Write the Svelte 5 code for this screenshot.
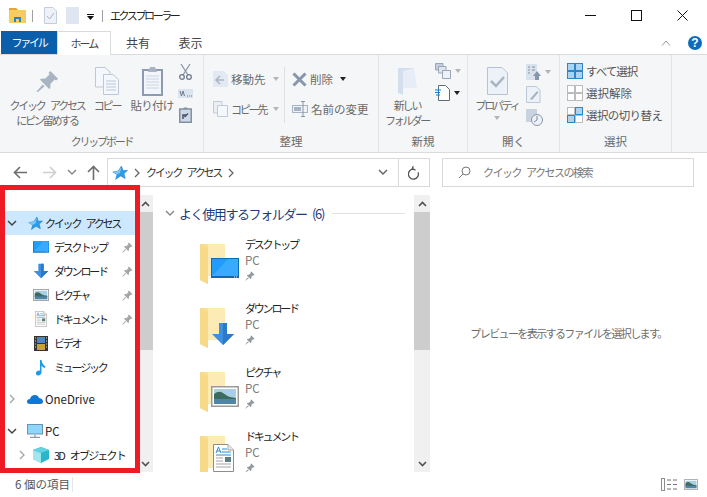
<script>
    const selectIcons = [
        { label: "すべて選択", on: [1, 1, 1, 1], cls: "tight-1" },
        { label: "選択解除", on: [0, 0, 0, 0], cls: "" },
        { label: "選択の切り替え", on: [0, 1, 1, 0], cls: "tight-2" },
    ];
    const tiles = ["デスクトップ", "ダウンロード", "ピクチャ", "ドキュメント"];
</script>

{#snippet pin(size, color)}
    <svg width={size} height={size} viewBox="0 0 24 24" fill={color}>
        <path d="M15 1 23 9 21 11 19.5 9.8 15 14.5Q15.8 18 14 20L4 10Q6 8.2 9.5 9L14.2 4.5 13 3Z" />
        <path d="M7 15 9 17 2 23H1V22Z" />
    </svg>
{/snippet}

{#snippet star(size)}
    <svg width={size} height={size} viewBox="0 0 16 16">
        <path d="M9.5 1 11 5.6 15.6 5.4 12 8.6 13.2 13.6 8.6 11 3.6 14.4 5 9.6.8 7 6.2 6Z" fill="#2b9ce8" stroke="#1976c8" stroke-width=".5" />
        <path d="M9.5 2 8 8 5 9.6.8 7 6.2 6Z" fill="#7cc8f5" />
    </svg>
{/snippet}

{#snippet desktop(w, h)}
    <svg width={w} height={h} viewBox="0 0 28 20">
        <rect width="28" height="20" fill="#0b6cb0" />
        <rect x="1" y="1" width="26" height="17" fill="#1f9dfa" />
        <path d="M1 18 17 1H27V18Z" fill="#39aaff" />
        <path d="M23 19h1M25 19h1" stroke="#cfe8fb" />
    </svg>
{/snippet}

{#snippet download(w, h)}
    <svg width={w} height={h} viewBox="0 0 24 24">
        <path d="M8 1H16V12H23L12 23 1 12H8Z" fill="#3d8fdf" />
        <path d="M12 1H16V12H23L12 23Z" fill="#2a79ca" />
    </svg>
{/snippet}

{#snippet picture(w, h)}
    <svg width={w} height={h} viewBox="0 0 28 21">
        <rect x=".75" y=".75" width="26.5" height="19.5" fill="#fff" stroke="#9a9a9a" stroke-width="1.5" />
        <rect x="3" y="3" width="22" height="15" fill="#a9cfe6" />
        <path d="M3 8Q8 4 12 7T19 11L25 12V14H3Z" fill="#3d6b5d" />
        <rect x="3" y="13" width="22" height="5" fill="#4f86a8" />
    </svg>
{/snippet}

{#snippet documentIcon(w, h)}
    <svg width={w} height={h} viewBox="0 0 21 28">
        <path d="M.5.5H15L20.5 6V27.5H.5Z" fill="#fff" stroke="#8d8d8d" />
        <path d="M15 .5V6H20.5" fill="#e8e8e8" stroke="#a8a8a8" />
        <path d="M3 9 5.5 3 8 9M4 7H7" fill="none" stroke="#2a8fd0" />
        <path d="M9 5H14M9 8H18M3 11H18" stroke="#2a8fd0" />
        <path d="M3 14H10M3 17H10M3 20H18M3 23H18" stroke="#a5a5a5" />
        <rect x="12" y="13" width="6" height="5" fill="#5a7f80" />
    </svg>
{/snippet}

{#snippet folder()}
    <svg width="26" height="41" viewBox="0 0 26 41">
        <path d="M0 1H25V33H8V41L0 37Z" fill="#f8e09a" />
        <path d="M8 1H25V33H8Z" fill="#fcebb4" />
        <path d="M0 1 8 5V41L0 37Z" fill="#f6da88" />
    </svg>
{/snippet}

{#snippet scrollbar()}
    <div class="scrollbar">
        <div class="arrow">
            <svg width="9" height="6" viewBox="0 0 9 6"><path d="M1 5 4.5 1.500 8 5" fill="none" stroke="#505050" stroke-width="1.600" /></svg>
        </div>
        <div class="thumb"></div>
        <div class="track"></div>
        <div class="arrow">
            <svg width="9" height="6" viewBox="0 0 9 6"><path d="M1 1 4.500 4.500 8 1" fill="none" stroke="#505050" stroke-width="1.600" /></svg>
        </div>
    </div>
{/snippet}

{#snippet chevronDown(color)}
    <svg width="10" height="7" viewBox="0 0 10 7"><path d="M1 1 5 5 9 1" fill="none" stroke={color} stroke-width="1.500" /></svg>
{/snippet}

{#snippet chevronRight(color)}
    <svg width="7" height="10" viewBox="0 0 7 10"><path d="M1 1 5 5 1 9" fill="none" stroke={color} stroke-width="1.300" /></svg>
{/snippet}

<div class="window">
    <div class="titlebar">
        <svg class="app-icon" width="17" height="15" viewBox="0 0 17 15">
            <path d="M0 0H7L9 2H17V15H0Z" fill="#f6cd5c" />
            <path d="M0 0H7L9 2H0Z" fill="#e4a63a" />
            <path d="M5 14V9H12V14H10V11H7V14Z" fill="#2e7fc4" />
        </svg>
        <span class="bar-sep"></span>
        <svg class="qa-one" width="13" height="17" viewBox="0 0 13 17">
            <path d="M.5.5H9L12.500 4V16.500H.5Z" fill="#eef2f8" stroke="#c2cede" />
            <path d="M3 9 5.500 12 10 6" fill="none" stroke="#a8b4c4" />
        </svg>
        <svg class="qa-two" width="13" height="17" viewBox="0 0 13 17">
            <path d="M0 0H13V17H0Z" fill="#dfe6f2" />
        </svg>
        <svg class="qa-menu" width="7" height="6" viewBox="0 0 7 6"><path d="M0 0H7V1H0ZM0 2H7L3.500 6Z" fill="#111" /></svg>
        <span class="bar-sep second"></span>
        <span class="title">エクスプローラー</span>
        <div class="window-buttons">
            <svg width="11" height="11" viewBox="0 0 11 11"><path d="M0 5.500H11" stroke="#111" /></svg>
            <svg width="11" height="11" viewBox="0 0 11 11"><rect x=".5" y=".5" width="10" height="10" fill="none" stroke="#111" /></svg>
            <svg width="11" height="11" viewBox="0 0 11 11"><path d="M.5.5 10.500 10.500M10.500.5 .5 10.500" stroke="#111" /></svg>
        </div>
    </div>

    <div class="tabs">
        <span class="tab file">ファイル</span>
        <span class="tab home">ホーム</span>
        <span class="tab share">共有</span>
        <span class="tab view">表示</span>
        <svg class="collapse" width="10" height="6" viewBox="0 0 10 6"><path d="M1 5.500 5 1 9 5.500" fill="none" stroke="#9a9a9a" /></svg>
        <span class="help">?</span>
    </div>

    <div class="ribbon">
        <section class="group clipboard">
            <div class="body">
                <div class="big pin-btn">
                    <div class="big-icon">{@render pin(23, "#a9b4c3")}</div>
                    <span class="kana">クイック アクセス<br />にピン留めする</span>
                </div>
                <div class="big copy-btn">
                    <div class="big-icon">
                        <svg width="24" height="28" viewBox="0 0 24 28">
                            <path d="M.5.500H10L15 5V20H.5Z" fill="#f4f7fb" stroke="#bcc8d8" />
                            <path d="M8.500 7.500H18L23.500 12.500V27.500H8.500Z" fill="#f4f7fb" stroke="#bcc8d8" />
                            <path d="M11 14H21M11 17H21M11 20H21M11 23H21" stroke="#bcc8d8" />
                        </svg>
                    </div>
                    <span class="kana">コピー</span>
                </div>
                <div class="big paste-btn">
                    <div class="big-icon">
                        <svg width="21" height="30" viewBox="0 0 21 30">
                            <rect x="1" y="4" width="19" height="25" fill="#f2f5fa" stroke="#8d9bb0" stroke-width="2" />
                            <path d="M7 4 8 1H13L14 4 15 6H6Z" fill="#a9b4c3" />
                            <path d="M4 10H17M4 13H17M4 16H17M4 19H17M4 22H17" stroke="#ccd5e2" />
                        </svg>
                    </div>
                    <span>貼り付け</span>
                </div>
                <div class="clip-small">
                    <svg width="13" height="17" viewBox="0 0 13 17">
                        <path d="M2 1 9 12M11 1 4 12" stroke="#8a96a8" stroke-width="1.300" fill="none" />
                        <circle cx="3" cy="14" r="2.300" fill="none" stroke="#6d7a8d" stroke-width="1.300" />
                        <circle cx="10" cy="14" r="2.300" fill="none" stroke="#6d7a8d" stroke-width="1.300" />
                    </svg>
                    <svg width="15" height="9" viewBox="0 0 15 9">
                        <rect width="15" height="9" fill="#dbe3ee" />
                        <path d="M2 2 3.500 7 5 2 6.500 7M9 7H10M11 7H12M13 7H14" stroke="#6d7a8d" fill="none" />
                    </svg>
                    <svg width="13" height="16" viewBox="0 0 13 16">
                        <rect x=".75" y="2" width="11.500" height="13.250" fill="#cfd8e4" stroke="#8290a4" stroke-width="1.500" />
                        <path d="M4 2 5 .5H8L9 2Z" fill="#8290a4" />
                        <path d="M4 12V8L8 8M5.500 10 9 6.500" stroke="#44546a" stroke-width="1.500" fill="none" />
                    </svg>
                </div>
            </div>
            <div class="group-label kana">クリップボード</div>
        </section>

        <section class="group organize">
            <div class="body">
                <div class="org-col">
                    <div class="org-row">
                        <svg width="15" height="16" viewBox="0 0 15 16">
                            <path d="M0 0H11L15 4V16H0Z" fill="#e3e9f2" />
                            <path d="M3 9H11M7 5 3 9 7 13" stroke="#a9b4c3" stroke-width="1.500" fill="none" />
                        </svg>
                        <span>移動先</span>
                        <i class="caret pale"></i>
                    </div>
                    <div class="org-row">
                        <svg width="15" height="16" viewBox="0 0 15 16">
                            <path d="M.5.500H9V12H.5Z" fill="#eaeff6" stroke="#c0cbda" />
                            <path d="M4.500 4.500H14.500V15.500H4.500Z" fill="#f4f7fb" stroke="#c0cbda" />
                        </svg>
                        <span class="kana">コピー先</span>
                        <i class="caret pale"></i>
                    </div>
                </div>
                <span class="org-sep"></span>
                <div class="org-col second">
                    <div class="org-row">
                        <svg width="15" height="15" viewBox="0 0 15 15"><path d="M1.500 1.500 13.500 13.500M13.500 1.500 1.500 13.500" stroke="#8796ac" stroke-width="3" /></svg>
                        <span>削除</span>
                        <i class="caret"></i>
                    </div>
                    <div class="org-row">
                        <svg width="16" height="16" viewBox="0 0 16 16">
                            <rect x=".5" y="4.500" width="15" height="7" fill="#eef2f8" stroke="#a9b4c3" />
                            <rect x="2" y="6" width="7" height="4" fill="#a9b4c3" />
                            <path d="M11 1V15M9 .5H13M9 15.500H13" stroke="#8796ac" />
                        </svg>
                        <span>名前の変更</span>
                    </div>
                </div>
            </div>
            <div class="group-label">整理</div>
        </section>

        <section class="group newgroup">
            <div class="body">
                <div class="big new-btn">
                    <div class="big-icon">
                        <svg width="19" height="27" viewBox="0 0 19 27">
                            <path d="M0 0H16V20H5V27L0 25Z" fill="#d4dfee" />
                            <path d="M5 3 16 0 19 20H5Z" fill="#e6edf6" />
                        </svg>
                    </div>
                    <span class="kana">新しい<br />フォルダー</span>
                </div>
                <div class="new-small">
                    <div class="small-line">
                        <svg width="16" height="16" viewBox="0 0 16 16">
                            <path d="M.5.500H8V7H.5Z" fill="#c4cedc" stroke="#9aa7b8" />
                            <path d="M3.500 3.500H11V10H3.500Z" fill="#dde4ee" stroke="#9aa7b8" />
                            <path d="M7.500 7.500H15.500V15.500H7.500Z" fill="#eef2f8" stroke="#9aa7b8" />
                        </svg>
                        <i class="caret pale"></i>
                    </div>
                    <div class="small-line">
                        <svg width="15" height="16" viewBox="0 0 15 16">
                            <path d="M3.500.500H10.500L14.500 4.500V15.500H3.500Z" fill="#fff" stroke="#5d6b7d" />
                            <path d="M0 5H6M0 7.500H5M1 10H5" stroke="#1e78c8" stroke-width="1.200" />
                        </svg>
                        <i class="caret"></i>
                    </div>
                </div>
            </div>
            <div class="group-label">新規</div>
        </section>

        <section class="group opengroup">
            <div class="body">
                <div class="big prop-btn">
                    <div class="big-icon">
                        <svg width="21" height="28" viewBox="0 0 21 28">
                            <path d="M.5.500H15L20.500 6V27.500H.5Z" fill="#edf2f8" stroke="#b6c3d4" />
                            <path d="M4 14 9 19 17 10" fill="none" stroke="#a9b4c3" stroke-width="2.500" />
                        </svg>
                    </div>
                    <span class="kana">プロパティ</span>
                    <i class="caret pale"></i>
                </div>
                <div class="open-small">
                    <div class="small-line">
                        <svg width="15" height="16" viewBox="0 0 15 16">
                            <path d="M0 0H11V16H0Z" fill="#d9e1ec" />
                            <path d="M2 3H4M6 3H9M2 6H4M6 6H9M2 9H4" stroke="#8190a4" />
                            <path d="M7 12 11 7 15 12H13V16H9V12Z" fill="#8796ac" />
                        </svg>
                        <i class="caret pale"></i>
                    </div>
                    <div class="small-line">
                        <svg width="15" height="17" viewBox="0 0 15 17">
                            <path d="M.5.500H10L14 4V16.500H.5Z" fill="#edf2f8" stroke="#bcc8d8" />
                            <path d="M4 13 11 5 12.500 6.500 6 14Z" fill="#a9b4c3" />
                        </svg>
                    </div>
                    <div class="small-line">
                        <svg width="17" height="17" viewBox="0 0 17 17">
                            <rect width="11" height="13" fill="#c9d3e0" />
                            <circle cx="11" cy="11" r="5.500" fill="#eef2f8" stroke="#8796ac" />
                            <path d="M11 7V11L8 13" stroke="#7a889c" fill="none" />
                        </svg>
                    </div>
                </div>
            </div>
            <div class="group-label">開く</div>
        </section>

        <section class="group selectgroup">
            <div class="body select-list">
                {#each selectIcons as row}
                    <div class="select-row">
                        <svg width="16" height="16" viewBox="0 0 16 16">
                            {#each row.on as on, i}
                                <rect
                                    x={i % 2 ? 8.5 : 0.5}
                                    y={i > 1 ? 8.5 : 0.5}
                                    width="7"
                                    height="7"
                                    fill={on ? "#a8d4f5" : "#fff"}
                                    stroke={on ? "#2d86c8" : "#bbb"}
                                />
                            {/each}
                        </svg>
                        <span class={row.cls}>{row.label}</span>
                    </div>
                {/each}
            </div>
            <div class="group-label">選択</div>
        </section>
    </div>

    <div class="navbar">
        <svg class="back" width="15" height="13" viewBox="0 0 15 13"><path d="M14 6.500H2M7 1 1.500 6.500 7 12" fill="none" stroke="#6d6d6d" stroke-width="1.600" /></svg>
        <svg class="forward" width="15" height="13" viewBox="0 0 15 13"><path d="M1 6.500H13M8 1 13.500 6.500 8 12" fill="none" stroke="#cfcfcf" stroke-width="1.600" /></svg>
        <span class="recent">{@render chevronDown("#8a8a8a")}</span>
        <svg class="up" width="13" height="15" viewBox="0 0 13 15"><path d="M6.500 15V2M1 7 6.500 1.500 12 7" fill="none" stroke="#6d6d6d" stroke-width="1.600" /></svg>
        <div class="address">
            {@render star(16)}
            <span class="crumb-chevron">{@render chevronRight("#666")}</span>
            <span class="crumb kana">クイック アクセス</span>
            <span class="crumb-chevron">{@render chevronRight("#666")}</span>
            <span class="address-drop">{@render chevronDown("#666")}</span>
            <span class="address-refresh">
                <svg width="13" height="14" viewBox="0 0 13 14"><path d="M5 3.500A5 5 0 1 0 9.500 5M3 1V4H6.500" transform="rotate(20 6.500 7)" fill="none" stroke="#555" stroke-width="1.300" /></svg>
            </span>
        </div>
        <div class="search">
            <svg width="13" height="13" viewBox="0 0 13 13"><circle cx="8" cy="5" r="4" fill="none" stroke="#777" /><path d="M5 8 1 12" stroke="#777" /></svg>
            <span>クイック アクセスの検索</span>
        </div>
    </div>

    <div class="panes">
        <div class="tree">
            <div class="tree-row selected">
                <span class="twist">{@render chevronDown("#444")}</span>
                <span class="lvl1">{@render star(15)}</span>
                <span class="label kana">クイック アクセス</span>
            </div>
            <div class="tree-row child">
                <span class="lvl2">{@render desktop(16, 12)}</span>
                <span class="label kana">デスクトップ</span>
                <span class="row-pin">{@render pin(11, "#a5a5a5")}</span>
            </div>
            <div class="tree-row child">
                <span class="lvl2">{@render download(16, 16)}</span>
                <span class="label kana">ダウンロード</span>
                <span class="row-pin">{@render pin(11, "#a5a5a5")}</span>
            </div>
            <div class="tree-row child">
                <span class="lvl2">{@render picture(16, 12)}</span>
                <span class="label kana">ピクチャ</span>
                <span class="row-pin">{@render pin(11, "#a5a5a5")}</span>
            </div>
            <div class="tree-row child">
                <span class="lvl2">{@render documentIcon(12, 16)}</span>
                <span class="label kana">ドキュメント</span>
                <span class="row-pin">{@render pin(11, "#a5a5a5")}</span>
            </div>
            <div class="tree-row child">
                <span class="lvl2">
                    <svg width="14" height="15" viewBox="0 0 14 15">
                        <rect width="14" height="15" fill="#333" />
                        <rect x="3" y="1" width="8" height="6" fill="#4d86c0" />
                        <rect x="3" y="8" width="8" height="6" fill="#c8a03c" />
                        <path d="M1 2H2M1 5H2M1 8H2M1 11H2M12 2H13M12 5H13M12 8H13M12 11H13" stroke="#ddd" />
                    </svg>
                </span>
                <span class="label kana">ビデオ</span>
            </div>
            <div class="tree-row child">
                <span class="lvl2">
                    <svg width="12" height="17" viewBox="0 0 12 17">
                        <path d="M5 1H6.500Q7 5 10.500 7.500L9.500 9Q7.500 8 6.500 6.500V13.500Q6 16.500 3 16.500 .5 16 1 13.500 2 11 5 11.500Z" fill="#1e9be8" />
                    </svg>
                </span>
                <span class="label kana">ミュージック</span>
            </div>
            <div class="tree-row top-gap">
                <span class="twist">{@render chevronRight("#a5a5a5")}</span>
                <span class="lvl1">
                    <svg width="16" height="10" viewBox="0 0 16 10"><path d="M3 10Q0 10 0 7.500 0 5 3 5 4 1 8 1 11 1 12 4 16 4.500 16 7.500 16 10 13 10Z" fill="#0f78d4" /></svg>
                </span>
                <span class="label">OneDrive</span>
            </div>
            <div class="tree-row top-gap">
                <span class="twist">{@render chevronDown("#444")}</span>
                <span class="lvl1">
                    <svg width="16" height="14" viewBox="0 0 16 14">
                        <rect x=".5" y=".5" width="15" height="9.500" fill="#8fd6fb" stroke="#6a93ad" />
                        <path d="M8 11V12.500M3 13.500H13" stroke="#8a9aa8" stroke-width="1.500" />
                    </svg>
                </span>
                <span class="label">PC</span>
            </div>
            <div class="tree-row child deep">
                <span class="twist">{@render chevronRight("#a5a5a5")}</span>
                <span class="lvl2">
                    <svg width="16" height="16" viewBox="0 0 16 16">
                        <path d="M8 0 16 3V12L8 16 0 12V3Z" fill="#2bb5c9" />
                        <path d="M0 3 8 6V16L0 12Z" fill="#9fe6ee" />
                        <path d="M8 0 16 3 8 6 0 3Z" fill="#63d2e0" />
                    </svg>
                </span>
                <span class="label object">3D オブジェクト</span>
            </div>
        </div>
        {@render scrollbar()}

        <div class="content">
            <div class="group-head">
                {@render chevronDown("#8a8a8a")}
                <span>よく使用するフォルダー (6)</span>
                <hr />
            </div>
            {#each tiles as name, i}
                <div class="tile">
                    <div class="tile-icon">
                        {@render folder()}
                        <div class="tile-badge" class:doc={i === 3}>
                            {#if i === 0}
                                {@render desktop(28, 20)}
                            {:else if i === 1}
                                {@render download(24, 24)}
                            {:else if i === 2}
                                {@render picture(28, 21)}
                            {:else}
                                {@render documentIcon(21, 28)}
                            {/if}
                        </div>
                    </div>
                    <div class="tile-text">
                        <span class="tile-name kana">{name}</span>
                        <span class="tile-sub">PC</span>
                        {@render pin(10, "#8f979f")}
                    </div>
                </div>
            {/each}
        </div>
        {@render scrollbar()}

        <div class="preview">プレビューを表示するファイルを選択します。</div>
    </div>

    <div class="status">
        <span class="count">6 個の項目</span>
        <div class="view-icons">
            <svg width="16" height="13" viewBox="0 0 16 13">
                <rect x=".5" y=".5" width="3" height="12" fill="#fff" stroke="#8f8f8f" />
                <path d="M6 2H10M12 2H16M6 6.500H10M12 6.500H16M6 11H10M12 11H16" stroke="#777" stroke-width="1.200" />
            </svg>
            {@render picture(14, 11)}
        </div>
    </div>

    <!-- annotation over the navigation pane -->
    <div class="highlight"></div>
</div>

<style>
    :global(body) {
        margin: 0;
        background: #fff;
    }

    .window {
        position: relative;
        width: 707px;
        height: 497px;
        overflow: hidden;
        background: #fff;
        color: #6a6a6a;
        font-family: "Noto Sans CJK JP", "Noto Sans", sans-serif;
        font-size: 11.5px;
        line-height: 15px;
    }

    svg {
        display: block;
        flex: none;
    }

    /* katakana runs in the original UI font are much narrower */
    .kana {
        font-size: 11px;
        letter-spacing: -2.2px;
        word-spacing: 5px;
    }
    .tight-1 {
        letter-spacing: -1px;
    }
    .tight-2 {
        letter-spacing: -0.6px;
    }

    /* title bar */
    .titlebar {
        height: 31px;
        display: flex;
        align-items: center;
        color: #222;
    }
    .app-icon {
        margin-left: 9px;
    }
    .bar-sep {
        width: 1px;
        height: 12px;
        background: #a0a0a0;
        margin-left: 6px;
    }
    .bar-sep.second {
        margin-left: 8px;
    }
    .qa-one {
        margin-left: 11px;
    }
    .qa-two {
        margin-left: 9px;
    }
    .qa-menu {
        margin-left: 8px;
        margin-top: 3px;
    }
    .title {
        margin-left: 7px;
        font-size: 11px;
        letter-spacing: -2.4px;
    }
    .window-buttons {
        margin-left: auto;
        margin-right: 19px;
        display: flex;
        gap: 35px;
    }

    /* tabs */
    .tabs {
        height: 24px;
        display: flex;
        align-items: stretch;
        border-bottom: 1px solid #dadbdc;
        box-sizing: border-box;
    }
    .tab {
        display: flex;
        align-items: center;
        justify-content: center;
        color: #444;
        font-size: 12px;
    }
    .file {
        margin-left: 1px;
        width: 56px;
        background: #0b5eaa;
        color: #fff;
        font-size: 11px;
        letter-spacing: -2.2px;
    }
    .home {
        width: 54px;
        height: 24px;
        box-sizing: border-box;
        background: #fff;
        border: 1px solid #dadbdc;
        border-bottom: none;
        font-size: 11px;
        letter-spacing: -1.9px;
    }
    .share {
        width: 54px;
    }
    .view {
        width: 51px;
    }
    .collapse {
        margin-left: auto;
        align-self: center;
    }
    .help {
        width: 14px;
        height: 14px;
        border-radius: 50%;
        background: #0f6cbd;
        color: #fff;
        font: bold 12px/14px "Liberation Sans", sans-serif;
        text-align: center;
        align-self: center;
        margin: 0 5px 0 17px;
    }

    /* ribbon */
    .ribbon {
        height: 98px;
        box-sizing: border-box;
        display: flex;
        background: #f5f6f7;
        border-bottom: 1px solid #dadbdc;
    }
    .group {
        display: flex;
        flex-direction: column;
        box-sizing: border-box;
        border-right: 1px solid #e2e3e4;
    }
    .body {
        height: 76px;
        padding-top: 9px;
        box-sizing: border-box;
        display: flex;
    }
    .group-label {
        text-align: center;
        line-height: 20px;
    }
    .clipboard {
        width: 204px;
    }
    .organize {
        width: 175px;
    }
    .newgroup {
        width: 89px;
    }
    .opengroup {
        width: 92px;
    }
    .selectgroup {
        width: 112px;
    }
    .big {
        display: flex;
        flex-direction: column;
        align-items: center;
        text-align: center;
        white-space: nowrap;
        letter-spacing: -0.8px;
    }
    .big-icon {
        height: 34px;
        display: flex;
        align-items: center;
    }
    .pin-btn {
        width: 84px;
        margin-left: 5px;
    }
    .copy-btn {
        width: 36px;
        margin-left: 0;
    }
    .paste-btn {
        width: 42px;
        margin-left: 6px;
    }
    .clip-small {
        margin: -1px 0 0 5px;
        display: flex;
        flex-direction: column;
        align-items: center;
        gap: 9px;
    }
    .org-col {
        display: flex;
        flex-direction: column;
        margin-left: 9px;
        width: 71px;
    }
    .org-col.second {
        width: 80px;
        margin-left: 7px;
    }
    .org-row {
        height: 30px;
        display: flex;
        align-items: center;
        gap: 3px;
        white-space: nowrap;
    }
    .org-sep {
        width: 1px;
        height: 56px;
        margin-top: 3px;
        background: #dfe0e1;
    }
    .caret {
        width: 0;
        height: 0;
        margin-left: 4px;
        border: 3.5px solid transparent;
        border-top: 4px solid #222;
        border-bottom: none;
    }
    .caret.pale {
        border-top-color: #b5b5b5;
    }
    .new-btn {
        width: 56px;
        margin-left: 0;
    }
    .new-small {
        margin: -1px 0 0 0;
        display: flex;
        flex-direction: column;
        gap: 6px;
    }
    .small-line {
        display: flex;
        align-items: center;
        gap: 0;
    }
    .prop-btn {
        width: 58px;
    }
    .prop-btn .caret {
        margin: 3px 0 0;
    }
    .open-small {
        display: flex;
        flex-direction: column;
        gap: 6px;
        margin-left: 0;
    }
    .select-list {
        flex-direction: column;
        padding: 5px 0 0 7px;
    }
    .select-row {
        height: 22px;
        display: flex;
        align-items: center;
        gap: 3px;
        white-space: nowrap;
        color: #555;
    }

    /* navigation bar */
    .navbar {
        height: 29px;
        margin-top: 5px;
        display: flex;
        align-items: center;
    }
    .back {
        margin-left: 13px;
    }
    .forward {
        margin-left: 14px;
    }
    .recent {
        margin-left: 10px;
    }
    .up {
        margin-left: 10px;
    }
    .address {
        margin-left: 7px;
        width: 323px;
        height: 29px;
        box-sizing: border-box;
        border: 1px solid #d9d9d9;
        display: flex;
        align-items: center;
        padding-left: 4px;
        color: #333;
    }
    .crumb {
        margin: 0 7px 0 5px;
    }
    .crumb-chevron {
        margin-left: 6px;
    }
    .crumb + .crumb-chevron {
        margin-left: 0;
    }
    .address-drop {
        margin-left: auto;
        width: 30px;
        display: flex;
        justify-content: center;
    }
    .address-refresh {
        width: 30px;
        height: 27px;
        border-left: 1px solid #d9d9d9;
        display: flex;
        align-items: center;
        justify-content: center;
    }
    .search {
        margin-left: 12px;
        width: 252px;
        height: 29px;
        box-sizing: border-box;
        border: 1px solid #d9d9d9;
        display: flex;
        align-items: center;
        gap: 12px;
        padding-left: 15px;
        color: #777;
        font-size: 11px;
        letter-spacing: -1.5px;
        word-spacing: 4px;
    }

    /* panes */
    .panes {
        margin-top: 8px;
        height: 277px;
        display: flex;
    }
    .tree {
        width: 137px;
        padding-top: 16px;
        box-sizing: border-box;
        color: #222;
        overflow: hidden;
    }
    .tree-row {
        height: 24px;
        display: flex;
        align-items: center;
        white-space: nowrap;
    }
    .tree-row.selected {
        background: #cce8ff;
    }
    .tree-row.child {
        padding-left: 33px;
    }
    .tree-row.top-gap {
        margin-top: 8px;
    }
    .tree-row.deep {
        padding-left: 17px;
    }
    .twist {
        width: 10px;
        margin-left: 7px;
        display: flex;
        justify-content: center;
    }
    .deep .twist {
        margin-left: 0;
        margin-right: 6px;
    }
    .lvl1 {
        width: 16px;
        margin-left: 10px;
        display: flex;
        justify-content: center;
    }
    .lvl1 + .label {
        margin-left: 2px;
    }
    .lvl2 {
        width: 16px;
        display: flex;
        justify-content: center;
    }
    .lvl2 + .label {
        margin-left: 5px;
    }
    .object {
        font-size: 11px;
        letter-spacing: -1.8px;
        word-spacing: 5px;
    }
    .row-pin {
        margin-left: auto;
        margin-right: 4px;
    }
    .scrollbar {
        width: 16px;
        flex: none;
        display: flex;
        flex-direction: column;
        background: #f0f0f0;
    }
    .arrow {
        height: 17px;
        display: flex;
        align-items: center;
        justify-content: center;
    }
    .thumb {
        height: 138px;
        background: #cdcdcd;
    }
    .track {
        flex: 1;
    }
    .content {
        width: 261px;
        box-sizing: border-box;
        overflow: hidden;
        color: #222;
    }
    .group-head {
        height: 36px;
        margin-bottom: 2px;
        padding-left: 12px;
        display: flex;
        align-items: center;
        color: #1f3a7a;
        font-size: 13px;
        box-sizing: border-box;
    }
    .group-head span {
        margin-left: 4px;
        white-space: nowrap;
        letter-spacing: -1.4px;
        word-spacing: 4px;
    }
    .group-head hr {
        flex: 1;
        height: 1px;
        border: none;
        background: #e2e2e2;
        margin: 0 9px 0 8px;
    }
    .tile {
        height: 64px;
        display: flex;
        padding-left: 47px;
    }
    .tile-icon {
        position: relative;
        width: 45px;
        padding-top: 10px;
    }
    .tile-badge {
        position: absolute;
        left: 11px;
        top: 25px;
    }
    .tile-badge.doc {
        left: 13px;
        top: 19px;
    }
    .tile-text {
        display: flex;
        flex-direction: column;
        padding-top: 4px;
    }
    .tile-name {
        height: 16px;
    }
    .tile-sub {
        height: 16px;
        color: #7b7b7b;
    }
    .tile-text svg {
        margin-top: 2px;
    }
    .preview {
        flex: 1;
        display: flex;
        align-items: center;
        justify-content: center;
        color: #6d6d6d;
        font-size: 11px;
        letter-spacing: -1.6px;
    }

    /* status bar */
    .status {
        height: 25px;
        display: flex;
        align-items: center;
        color: #555;
    }
    .count {
        margin-left: 15px;
        padding-right: 2px;
        border-right: 1px solid #e6e6e6;
    }
    .view-icons {
        margin-left: auto;
        margin-right: 9px;
        display: flex;
        align-items: center;
        gap: 7px;
    }

    .highlight {
        position: absolute;
        left: 0;
        top: 185px;
        width: 140px;
        height: 288px;
        box-sizing: border-box;
        border: 5px solid #ed1c24;
        pointer-events: none;
    }
</style>
